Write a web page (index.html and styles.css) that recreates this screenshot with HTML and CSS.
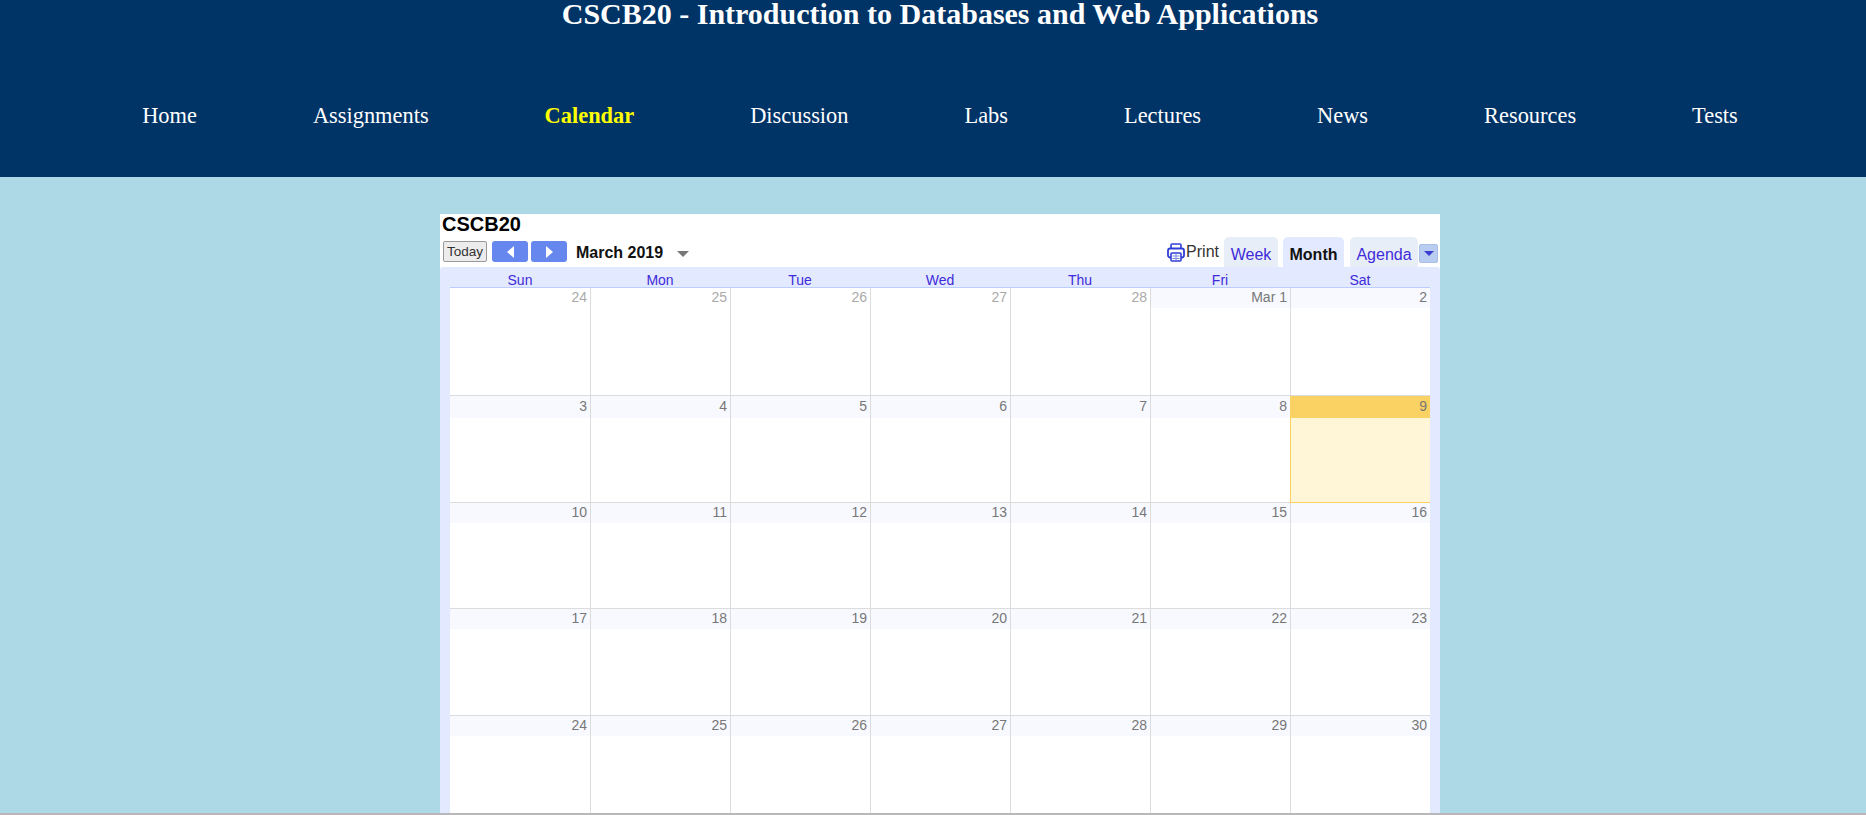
FILE: index.html
```html
<!DOCTYPE html>
<html lang="en">
<head>
    <meta charset="UTF-8">
    <meta name="viewport" content="width=device-width, initial-scale=1.0">
    <title>CSCB20 - Calendar</title>
    <link rel="stylesheet" href="styles.css">
</head>
<body>

    <header class="site-header">
        <h1>CSCB20 - Introduction to Databases and Web Applications</h1>
        <nav class="site-nav">
            <a href="#">Home</a>
            <a href="#">Assignments</a>
            <a href="#" class="current">Calendar</a>
            <a href="#">Discussion</a>
            <a href="#">Labs</a>
            <a href="#">Lectures</a>
            <a href="#">News</a>
            <a href="#">Resources</a>
            <a href="#">Tests</a>
        </nav>
    </header>

    <main class="calendar">
        <div class="cal-title">CSCB20</div>

        <div class="cal-toolbar">
            <button class="today-button">Today</button>
            <button class="arrow-button"><span class="arrow-left"></span></button>
            <button class="arrow-button"><span class="arrow-right"></span></button>
            <span class="cal-month">March 2019</span>
            <span class="month-caret"></span>

            <div class="cal-views">
                <span class="print-link">
                    <!-- printer icon -->
                    <svg class="print-icon" width="18" height="19" viewBox="0 0 18 19" fill="none" stroke="#2f3fd6" stroke-width="1.6">
                        <path d="M4 6V2.2Q4 1 5.2 1h7.6Q14 1 14 2.2V6"/>
                        <rect x="1" y="5.5" width="16" height="9" rx="2.2" stroke-width="1.8"/>
                        <rect x="4" y="10" width="10" height="8" rx="1" fill="#fff" stroke-width="1.6"/>
                        <path d="M5.5 13h7M5.5 15.5h7M9 11v6" stroke-width="1" stroke="#7c88e4"/>
                    </svg>Print
                </span>
                <span class="view-tab tab-week">Week</span>
                <span class="view-tab tab-month selected">Month</span>
                <span class="view-tab tab-agenda">Agenda</span>
                <span class="view-menu"><span class="view-menu-caret"></span></span>
            </div>
        </div>

        <div class="cal-body">
            <div class="weekdays">
                <div>Sun</div>
                <div>Mon</div>
                <div>Tue</div>
                <div>Wed</div>
                <div>Thu</div>
                <div>Fri</div>
                <div>Sat</div>
            </div>

            <div class="month-grid">
                <div class="day other"><div class="day-num">24</div></div>
                <div class="day other"><div class="day-num">25</div></div>
                <div class="day other"><div class="day-num">26</div></div>
                <div class="day other"><div class="day-num">27</div></div>
                <div class="day other"><div class="day-num">28</div></div>
                <div class="day"><div class="day-num">Mar 1</div></div>
                <div class="day"><div class="day-num">2</div></div>

                <div class="day tall"><div class="day-num">3</div></div>
                <div class="day tall"><div class="day-num">4</div></div>
                <div class="day tall"><div class="day-num">5</div></div>
                <div class="day tall"><div class="day-num">6</div></div>
                <div class="day tall"><div class="day-num">7</div></div>
                <div class="day tall"><div class="day-num">8</div></div>
                <div class="day tall today"><div class="day-num">9</div></div>

                <div class="day"><div class="day-num">10</div></div>
                <div class="day"><div class="day-num">11</div></div>
                <div class="day"><div class="day-num">12</div></div>
                <div class="day"><div class="day-num">13</div></div>
                <div class="day"><div class="day-num">14</div></div>
                <div class="day"><div class="day-num">15</div></div>
                <div class="day"><div class="day-num">16</div></div>

                <div class="day"><div class="day-num">17</div></div>
                <div class="day"><div class="day-num">18</div></div>
                <div class="day"><div class="day-num">19</div></div>
                <div class="day"><div class="day-num">20</div></div>
                <div class="day"><div class="day-num">21</div></div>
                <div class="day"><div class="day-num">22</div></div>
                <div class="day"><div class="day-num">23</div></div>

                <div class="day"><div class="day-num">24</div></div>
                <div class="day"><div class="day-num">25</div></div>
                <div class="day"><div class="day-num">26</div></div>
                <div class="day"><div class="day-num">27</div></div>
                <div class="day"><div class="day-num">28</div></div>
                <div class="day"><div class="day-num">29</div></div>
                <div class="day"><div class="day-num">30</div></div>
            </div>
        </div>
    </main>

    <div class="page-edge"></div>

</body>
</html>
```

FILE: styles.css
```css
html, body {
    height: 100%;
}

body {
    margin: 0;
    background-color: #add8e6;
    font-family: "Liberation Sans", Arial, sans-serif;
    display: flex;
    flex-direction: column;
    overflow: hidden;
}

/* header */
.site-header {
    flex: none;
    height: 177px;
    padding-left: 14px;
    background-color: #003366;
    color: white;
    font-family: "Liberation Serif", "Times New Roman", serif;
    text-align: center;
}

.site-header h1 {
    margin: 0;
    font-size: 30px;
    line-height: 28px;
}

.site-nav {
    display: flex;
    justify-content: center;
    gap: 116px;
    padding-top: 75px;
    font-size: 22.4px;
    line-height: 26px;
}

.site-nav a {
    color: white;
    text-decoration: none;
}

.site-nav a.current {
    color: yellow;
    font-weight: bold;
}

/* calendar */
.calendar {
    flex: 1;
    min-height: 0;
    width: 1000px;
    margin: 37px 0 0 440px;
    background-color: white;
    display: flex;
    flex-direction: column;
    overflow: hidden;
}

.cal-title {
    flex: none;
    height: 22px;
    padding-left: 2px;
    font-size: 20px;
    font-weight: bold;
    line-height: 21px;
    color: black;
}

.cal-toolbar {
    flex: none;
    height: 31px;
    padding-left: 3px;
    display: flex;
    align-items: flex-start;
}

.today-button {
    width: 44px;
    height: 21px;
    margin-top: 5px;
    padding: 0;
    border: 1px solid #999;
    border-radius: 2px;
    background-color: #ececec;
    color: #333;
    font-family: inherit;
    font-size: 13.5px;
    line-height: 19px;
}

.arrow-button {
    width: 36px;
    height: 21px;
    margin-top: 5px;
    margin-left: 3px;
    padding: 0;
    border: none;
    border-radius: 3px;
    background-color: #6688ee;
    display: flex;
    align-items: center;
    justify-content: center;
}

.today-button + .arrow-button {
    margin-left: 5px;
}

.arrow-left, .arrow-right {
    width: 0;
    height: 0;
    border-top: 6px solid transparent;
    border-bottom: 6px solid transparent;
}

.arrow-left {
    border-right: 7px solid white;
}

.arrow-right {
    border-left: 7px solid white;
}

.cal-month {
    margin-left: 9px;
    margin-top: 7px;
    font-size: 16px;
    font-weight: bold;
    line-height: 19px;
    color: #111;
}

.month-caret {
    width: 0;
    height: 0;
    margin-left: 14px;
    margin-top: 15px;
    border-left: 6px solid transparent;
    border-right: 6px solid transparent;
    border-top: 6px solid #777;
}

.cal-views {
    margin-left: auto;
    padding-right: 2px;
    display: flex;
    align-items: flex-start;
}

.print-link {
    margin-top: 6px;
    margin-right: 5px;
    font-size: 16px;
    line-height: 19px;
    color: #333;
    display: flex;
    align-items: flex-start;
}

.print-icon {
    margin-top: 1px;
    margin-right: 1px;
}

.view-tab {
    height: 30px;
    margin-top: 1px;
    margin-left: 5px;
    border-radius: 5px 5px 0 0;
    background-color: #e8eef7;
    color: #3f2bd9;
    font-size: 16px;
    line-height: 35px;
    text-align: center;
}

.tab-week {
    width: 54px;
    margin-left: 0;
}

.tab-month {
    width: 61px;
}

.tab-agenda {
    width: 68px;
    margin-left: 6px;
}

.view-tab.selected {
    background-color: #e3e9ff;
    color: #111;
    font-weight: bold;
}

.view-menu {
    width: 17px;
    height: 17px;
    margin-top: 8px;
    margin-left: 1px;
    border: 1px solid #a9bfe8;
    border-radius: 2px;
    background-color: #b9cdf0;
    display: flex;
    align-items: center;
    justify-content: center;
}

.view-menu-caret {
    width: 0;
    height: 0;
    border-left: 5px solid transparent;
    border-right: 5px solid transparent;
    border-top: 5px solid #3a3fd0;
}

.cal-body {
    flex: 1;
    padding: 0 10px;
    border-radius: 3px 3px 0 0;
    background-color: #e3e9ff;
}

.weekdays {
    height: 20px;
    display: grid;
    grid-template-columns: repeat(7, 140px);
    border-bottom: 1px solid #bccdff;
    font-size: 14px;
    line-height: 27px;
    color: #3f2bd9;
    text-align: center;
}

.month-grid {
    display: grid;
    grid-template-columns: repeat(7, 140px);
    grid-template-rows: 108px 107px 106px 107px 107px;
    background-color: white;
}

.day {
    border-left: 1px solid #dcdcdc;
    border-bottom: 1px solid #dcdcdc;
    box-sizing: border-box;
    font-size: 14px;
    color: #777;
    text-align: right;
}

.day:nth-child(7n+1) {
    border-left: none;
}

.day-num {
    height: 20px;
    padding-right: 3px;
    background-color: #f8f9ff;
    line-height: 18px;
}

.day.tall .day-num {
    height: 22px;
    line-height: 20px;
}

.day.other .day-num {
    background-color: white;
    color: #aaa;
}

.day.today {
    background-color: #fff5d7;
    border-left-color: #fad163;
    border-bottom-color: #fad163;
}

.day.today .day-num {
    background-color: #fad163;
}

.page-edge {
    flex: none;
    height: 2px;
    background-color: #b8b8b8;
}
```
